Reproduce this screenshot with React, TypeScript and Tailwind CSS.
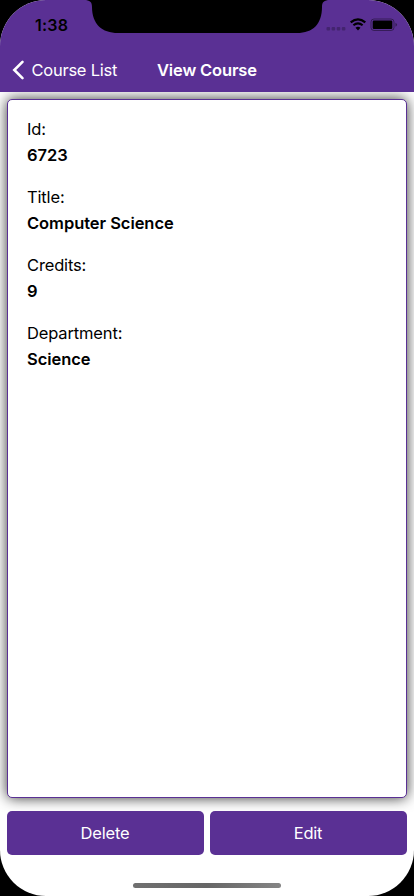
import React from "react";

const fields = [
  { label: "Id:", value: "6723" },
  { label: "Title:", value: "Computer Science" },
  { label: "Credits:", value: "9" },
  { label: "Department:", value: "Science" },
];

function Notch() {
  return (
    <svg className="absolute left-0 top-0" width="414" height="34" viewBox="0 0 414 34">
      <path d="M84 0 C90 0 92 2 92 7 C92 24 102 33 118 33 H297 C313 33 322 24 322 7 C322 2 324 0 330 0 Z" fill="#000" />
    </svg>
  );
}

function StatusIcons() {
  return (
    <svg width="72" height="16" viewBox="326 17 72 16" fill="none">
      <g fill="#000" fillOpacity="0.25">
        <rect x="326.5" y="27" width="3.6" height="3.4" rx="1" />
        <rect x="331.6" y="27" width="3.6" height="3.4" rx="1" />
        <rect x="336.7" y="27" width="3.6" height="3.4" rx="1" />
        <rect x="341.8" y="27" width="3.6" height="3.4" rx="1" />
      </g>
      <path d="M350.7 22.4 Q358 16.2 365.3 22.4" stroke="#000" strokeWidth="2.2" />
      <path d="M353.4 25.3 Q358 21.4 362.6 25.3" stroke="#000" strokeWidth="2.1" />
      <path d="M355.5 27.8 Q358 25.9 360.5 27.8 L358 30.4 Z" fill="#000" />
      <rect x="371" y="19" width="23" height="11.5" rx="3" stroke="#000" strokeOpacity="0.4" />
      <rect x="372.7" y="20.6" width="19.6" height="8.3" rx="1.2" fill="#000" />
      <path d="M395.5 22.7 Q397 23.5 397 24.8 Q397 26 395.5 26.8 Z" fill="#000" fillOpacity="0.45" />
    </svg>
  );
}

export default function App() {
  return (
    <div className="h-[896px] w-[414px] overflow-hidden bg-black font-['Inter',sans-serif] text-black">
      <div className="relative flex h-full flex-col overflow-hidden rounded-[46px] bg-white">
        <header className="relative z-10 h-[92px] shrink-0 bg-[#5a3094]">
          <Notch />
          <div className="flex h-12 items-start justify-between pl-[35px] pr-4 pt-[17px]">
            <span className="text-[16px] font-semibold leading-4 tracking-[0.2px]">1:38</span>
            <StatusIcons />
          </div>
          <div className="grid h-11 grid-cols-[157px_1fr] items-center text-white">
            <div className="flex items-center pl-3">
              <svg width="13" height="22" viewBox="0 0 13 22" fill="none">
                <path d="M10.5 2.8 L2.3 11 L10.5 19.2" stroke="#fff" strokeWidth="2.6" strokeLinecap="round" />
              </svg>
              <span className="ml-[6.5px] whitespace-nowrap text-[16.5px] leading-5 tracking-[-0.25px]">Course List</span>
            </div>
            <h1 className="whitespace-nowrap text-[16.5px] font-semibold leading-5 tracking-[-0.15px]">View Course</h1>
          </div>
        </header>
        <main className="mx-[7px] mt-[7px] flex h-[699px] shrink-0 flex-col gap-[15px] rounded-[5px] border border-[#5a3094] bg-white px-[19px] pt-4 shadow-[0_0_14px_rgba(0,0,0,0.8)]">
          {fields.map((f) => (
            <div key={f.label} className="h-[53px] text-[16.5px] leading-[26px]">
              <div className="tracking-[-0.15px]">{f.label}</div>
              <div className="font-semibold tracking-[-0.05px]">{f.value}</div>
            </div>
          ))}
        </main>
        <div className="mx-[7px] mt-[13px] grid h-11 shrink-0 grid-cols-2 gap-1.5 text-[16.5px] tracking-[-0.2px] text-white">
          <button className="rounded-[5px] bg-[#5a3094] pr-px">Delete</button>
          <button className="rounded-[5px] bg-[#5a3094] pr-px">Edit</button>
        </div>
        <div className="ml-[133px] mt-7 h-[5px] w-[148px] shrink-0 rounded-full bg-linear-to-r from-[#707070] via-[#666] to-[#858585]" />
      </div>
    </div>
  );
}
